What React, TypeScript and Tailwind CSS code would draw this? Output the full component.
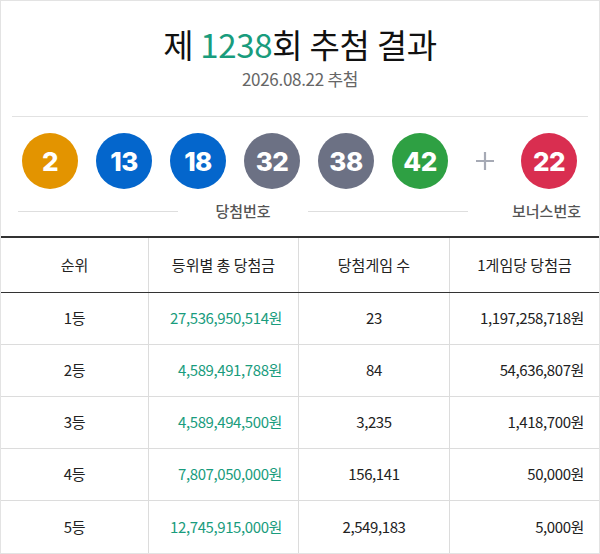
import React from 'react';

const balls = [
  { n: 2, color: 'bg-[#e39400]' },
  { n: 13, color: 'bg-[#0466cc]' },
  { n: 18, color: 'bg-[#0466cc]' },
  { n: 32, color: 'bg-[#6c7184]' },
  { n: 38, color: 'bg-[#6c7184]' },
  { n: 42, color: 'bg-[#2ea043]' },
];

const rows = [
  { rank: '1등', total: '27,536,950,514원', count: '23', each: '1,197,258,718원' },
  { rank: '2등', total: '4,589,491,788원', count: '84', each: '54,636,807원' },
  { rank: '3등', total: '4,589,494,500원', count: '3,235', each: '1,418,700원' },
  { rank: '4등', total: '7,807,050,000원', count: '156,141', each: '50,000원' },
  { rank: '5등', total: '12,745,915,000원', count: '2,549,183', each: '5,000원' },
];

function Ball({ n, color }: { n: number; color: string }) {
  return (
    <div
      className={`${color} w-[56px] h-[56px] rounded-full flex items-center justify-center text-white text-[26px] font-extrabold tracking-[-0.5px]`}
      style={{ fontFamily: 'Inter, "Noto Sans", sans-serif' }}
    >
      {n}
    </div>
  );
}

export default function App() {
  return (
    <div
      className="w-[600px] h-[554px] bg-white border border-[#e3e3e3] flex flex-col text-[#222]"
      style={{ fontFamily: '"Noto Sans CJK KR", "Noto Sans", sans-serif' }}
    >
      {/* header */}
      <div className="flex flex-col items-center pt-[23px]">
        <h1 className="text-[33px] leading-[40px] font-normal tracking-[-0.3px] text-[#111]">
          제 <span className="text-[#199c7d]">1238</span>회 추첨 결과
        </h1>
        <p className="mt-[5px] text-[17px] leading-[20px] text-[#666] tracking-[-0.3px]">2026.08.22 추첨</p>
      </div>

      <div className="mx-[11px] mt-[27px] h-px bg-[#e2e2e2]" />

      {/* balls */}
      <div className="flex items-center pl-[21px] mt-[16px]">
        <div className="flex gap-[18px]">
          {balls.map((b) => (
            <Ball key={b.n} n={b.n} color={b.color} />
          ))}
        </div>
        <div className="w-[73px] flex items-center justify-center">
          <svg width="22" height="22" viewBox="0 0 22 22">
            <path d="M11 2v18M2 11h18" stroke="#a6aab5" strokeWidth="2.2" />
          </svg>
        </div>
        <Ball n={22} color="bg-[#d92e50]" />
      </div>

      {/* labels */}
      <div className="flex items-center pl-[17px] mt-[12px] h-[20px]">
        <div className="w-[160px] h-px bg-[#dedede]" />
        <div className="w-[130px] text-center text-[15px] font-medium text-[#555]">당첨번호</div>
        <div className="w-[160px] h-px bg-[#dedede]" />
        <div className="ml-[44px] text-[15px] font-medium text-[#555]">보너스번호</div>
      </div>

      {/* table */}
      <div className="mt-auto border-t-2 border-[#333]">
        <div className="grid grid-cols-[148px_150px_151px_1fr] h-[55px] border-b border-[#333] text-[15px] text-[#222]">
          <div className="flex items-center justify-center border-r border-[#dcdcdc]">순위</div>
          <div className="flex items-center justify-center border-r border-[#dcdcdc]">등위별 총 당첨금</div>
          <div className="flex items-center justify-center border-r border-[#dcdcdc]">당첨게임 수</div>
          <div className="flex items-center justify-center">1게임당 당첨금</div>
        </div>
        {rows.map((r, i) => (
          <div
            key={r.rank}
            className={`grid grid-cols-[148px_150px_151px_1fr] h-[52px] text-[15px] tracking-[-0.4px] ${i < rows.length - 1 ? 'border-b border-[#dcdcdc]' : ''}`}
          >
            <div className="flex items-center justify-center border-r border-[#dcdcdc]">{r.rank}</div>
            <div className="flex items-center justify-end pr-[16px] border-r border-[#dcdcdc] text-[#199c7d]">{r.total}</div>
            <div className="flex items-center justify-center border-r border-[#dcdcdc]">{r.count}</div>
            <div className="flex items-center justify-end pr-[15px]">{r.each}</div>
          </div>
        ))}
      </div>
    </div>
  );
}
